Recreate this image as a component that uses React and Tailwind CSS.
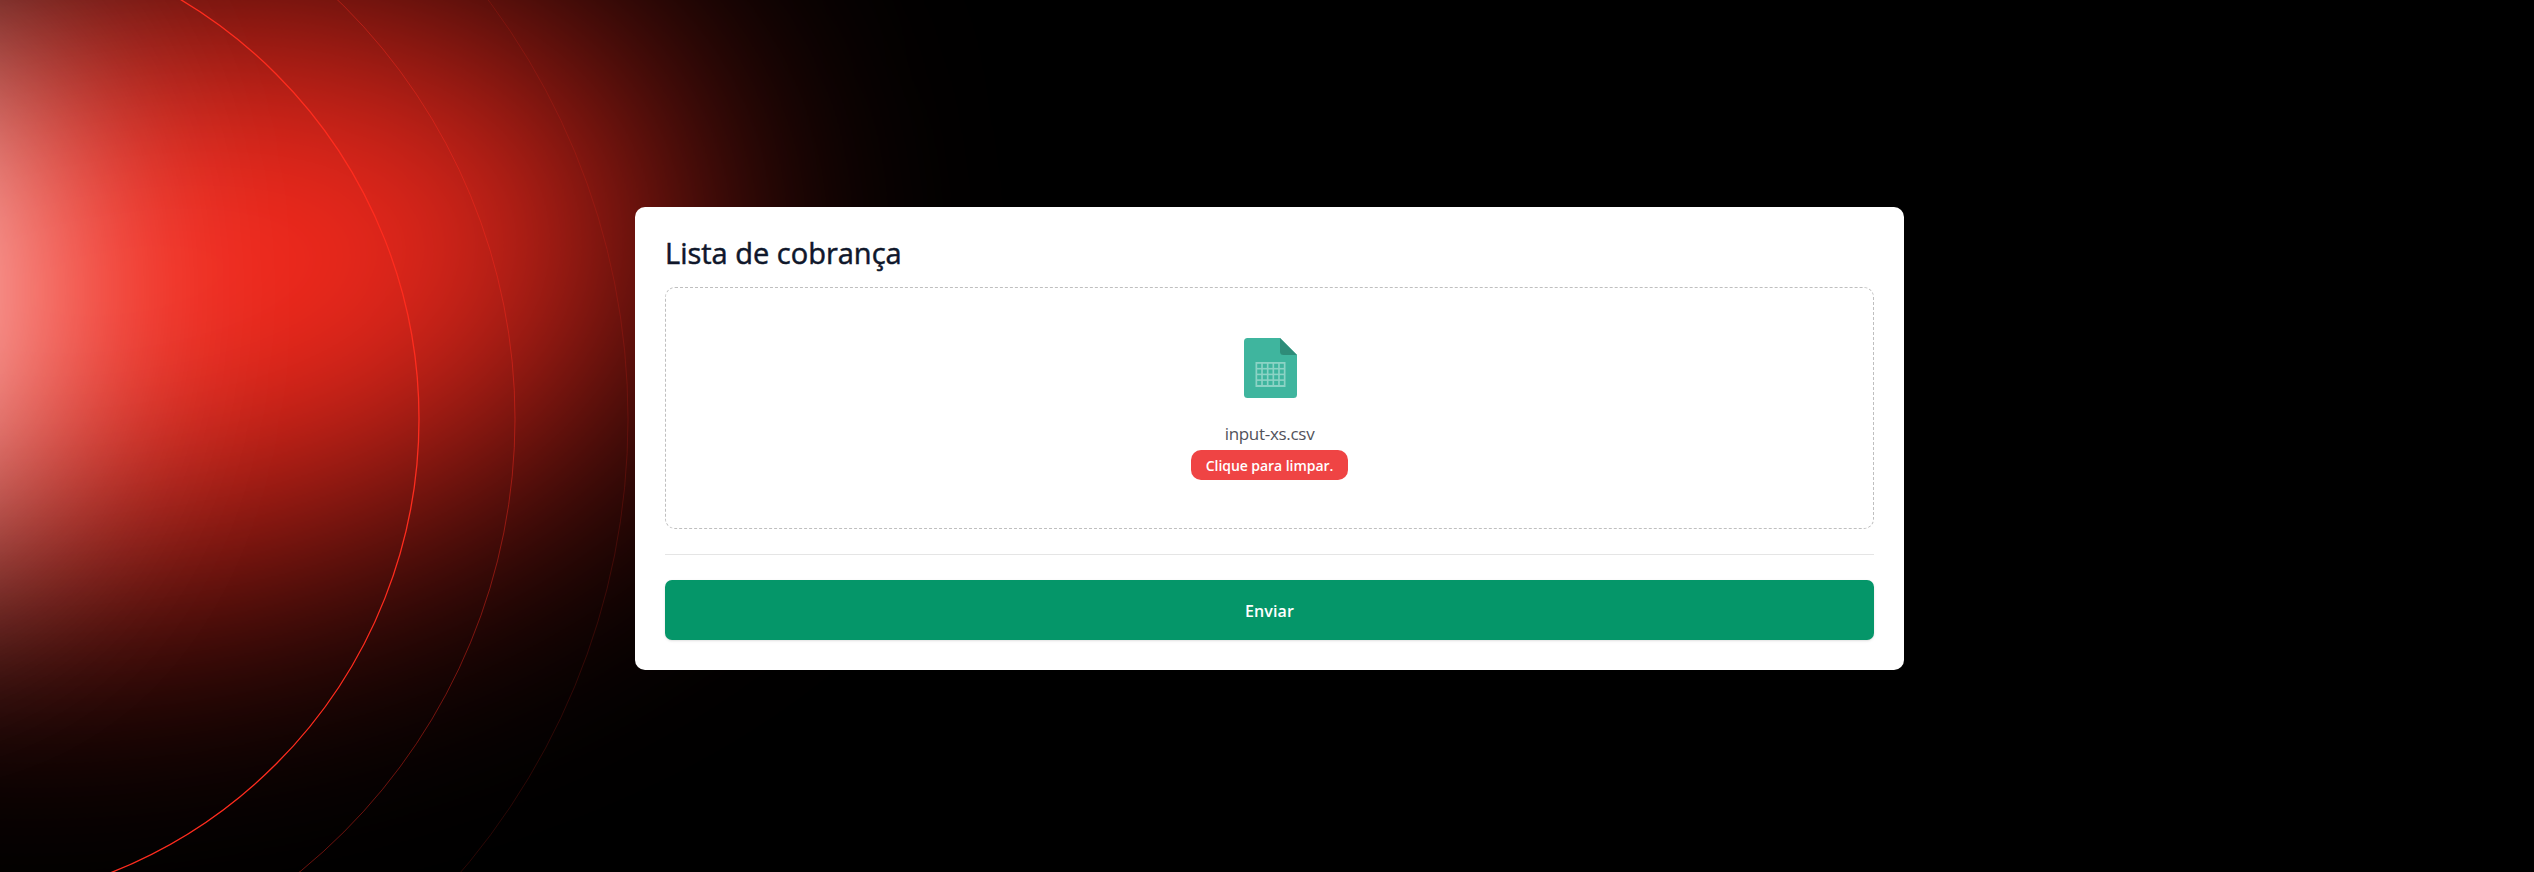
function Backdrop() {
  return (
    <svg className="absolute inset-0 h-full w-full" viewBox="0 0 2534 872" preserveAspectRatio="xMinYMin slice" fill="none" aria-hidden="true">
      <defs>
        <filter id="glow" filterUnits="userSpaceOnUse" x="-1400" y="-900" width="3400" height="2600" colorInterpolationFilters="sRGB">
          <feGaussianBlur stdDeviation="150" />
        </filter>
        <filter id="halo" filterUnits="userSpaceOnUse" x="-1200" y="-800" width="3000" height="2400" colorInterpolationFilters="sRGB">
          <feGaussianBlur stdDeviation="128" />
        </filter>
      </defs>
      <ellipse cx="125" cy="281" rx="550" ry="284" fill="#fc2b1e" filter="url(#glow)" transform="rotate(-8 125 281)" />
      <ellipse cx="-150" cy="290" rx="175" ry="255" fill="#ffffff" fillOpacity="0.9" filter="url(#halo)" />
      <g stroke="#fe2c1e">
        <circle cx="-69" cy="419" r="488" strokeWidth="1.3" />
        <circle cx="-69" cy="419" r="584" strokeOpacity="0.42" />
        <circle cx="-70" cy="419" r="698" strokeOpacity="0.17" />
      </g>
    </svg>
  );
}

const COLUMNS = [0, 1, 2, 3, 4];
const ROWS = [0, 1, 2, 3];

function SheetIcon() {
  return (
    <svg className="ml-px h-[60px] w-[53px]" viewBox="0 0 53 60" aria-hidden="true">
      <path d="M3.5 0H36L53 17V56.5Q53 60 49.5 60H3.5Q0 60 0 56.5V3.5Q0 0 3.5 0Z" fill="#3fb59e" />
      <path d="M36 0L53 17H39.5Q36 17 36 13.5Z" fill="#2e8c79" />
      <rect x="11.5" y="24" width="30" height="25" fill="#8cd3c5" />
      {ROWS.map((r) =>
        COLUMNS.map((c) => (
          <rect key={`${r}-${c}`} x={13.2 + c * 5.65} y={25.8 + r * 5.7} width="4" height="4.1" fill="#3fb59e" />
        )),
      )}
    </svg>
  );
}

export default function App() {
  return (
    <div className="relative flex h-[872px] w-full justify-center overflow-hidden bg-black pt-[207px] pl-[5px] font-['Open_Sans','Noto_Sans',sans-serif]">
      <Backdrop />
      <main className="relative flex h-[463px] w-[1269px] flex-col rounded-[10px] bg-white p-[30px]">
        <h1 className="h-[50px] text-[29px] leading-[32px] font-medium text-slate-900 [-webkit-text-stroke:0.5px]">Lista de cobrança</h1>
        <div className="flex h-[242px] flex-col items-center rounded-[10px] border border-dashed border-[#bfbfbf] pt-[50px]">
          <SheetIcon />
          <span className="mt-[20px] h-[32px] text-[17px] leading-[31px] tracking-[-0.3px] text-[#52525b]">input-xs.csv</span>
          <button className="h-[30px] w-[157px] rounded-[10px] bg-[#ef4444] text-[14px] font-semibold tracking-[-0.05px] text-white">
            Clique para limpar.
          </button>
        </div>
        <hr className="mt-[25px] border-[#e5e5e5]" />
        <button className="mt-[25px] h-[60px] rounded-[7px] bg-[#059669] pt-px text-[16px] font-semibold tracking-[0.1px] text-white shadow-sm">Enviar</button>
      </main>
    </div>
  );
}
